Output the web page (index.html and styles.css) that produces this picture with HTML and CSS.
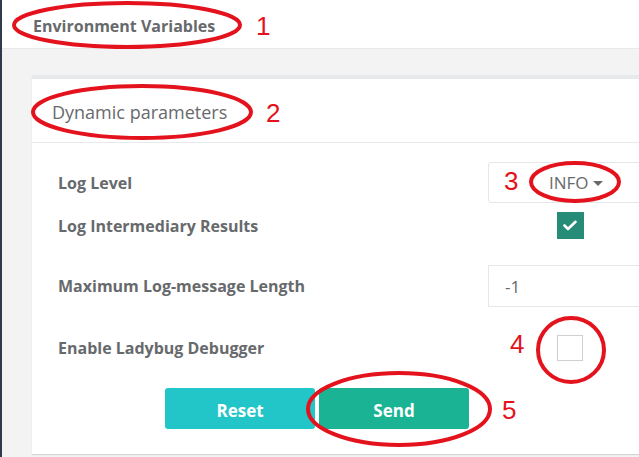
FILE: index.html
```html
<!DOCTYPE html>
<html>
<head>
<meta charset="utf-8">
<link rel="stylesheet" href="styles.css">
</head>
<body>
<div class="page">
  <div class="edge"></div>
  <div class="main">
    <div class="topbar"><span class="topbar-title">Environment Variables</span></div>
    <div class="content">
      <div class="card">
        <div class="card-title">Dynamic parameters</div>
        <div class="card-body">
          <div class="row r1">
            <div class="label">Log Level</div>
            <div class="control"><div class="select"><span>INFO</span><span class="caret"></span></div></div>
          </div>
          <div class="row r2">
            <div class="label">Log Intermediary Results</div>
            <div class="control center">
              <div class="check checked">
                <svg width="14" height="11" viewBox="0 0 14 11"><path d="M1.5 5.5 L5 9 L12.5 1.8" fill="none" stroke="#fff" stroke-width="2.6" stroke-linecap="round" stroke-linejoin="round"/></svg>
              </div>
            </div>
          </div>
          <div class="row r3">
            <div class="label">Maximum Log-message Length</div>
            <div class="control"><div class="input">-1</div></div>
          </div>
          <div class="row r4">
            <div class="label">Enable Ladybug Debugger</div>
            <div class="control center"><div class="check"></div></div>
          </div>
          <div class="buttons">
            <button class="btn btn-reset">Reset</button>
            <button class="btn btn-send">Send</button>
          </div>
        </div>
      </div>
    </div>
  </div>
</div>
<svg class="marks" width="639" height="457" viewBox="0 0 639 457">
  <g fill="none" stroke="#e3121c" stroke-width="4">
    <ellipse cx="127" cy="25" rx="113" ry="22"/>
    <ellipse cx="142" cy="112" rx="109" ry="26"/>
    <ellipse cx="575" cy="182" rx="44" ry="19"/>
    <ellipse cx="571" cy="350" rx="33" ry="32"/>
    <ellipse cx="399" cy="409" rx="91" ry="36"/>
  </g>
</svg>
<div class="num n1">1</div>
<div class="num n2">2</div>
<div class="num n3">3</div>
<div class="num n4">4</div>
<div class="num n5">5</div>
</body>
</html>
```
FILE: styles.css
```css
html, body {
  margin: 0;
  padding: 0;
  width: 639px;
  height: 457px;
  overflow: hidden;
  font-family: "Open Sans", "Liberation Sans", sans-serif;
  color: #676a6c;
}
.page {
  display: flex;
  height: 457px;
  position: relative;
}
.edge {
  width: 2px;
  flex: none;
  background: #2f3b4a;
}
.main {
  flex: 1;
  display: flex;
  flex-direction: column;
  min-width: 0;
}
.topbar {
  box-sizing: border-box;
  height: 49px;
  background: #fff;
  border-bottom: 1px solid #e7eaec;
  display: flex;
  align-items: center;
  padding-left: 31px;
  padding-top: 3px;
  flex: none;
}
.topbar-title {
  font-weight: 700;
  font-size: 16px;
}
.content {
  flex: 1;
  background: #f3f3f4;
  padding: 26px 0 0 30px;
  min-width: 0;
}
.card {
  border-top: 4px solid #e7eaec;
  background: #fff;
  box-shadow: 0 1px 1px rgba(0,0,0,0.12);
  overflow: hidden;
}
.card-title {
  box-sizing: border-box;
  height: 64px;
  border-bottom: 1px solid #e7eaec;
  display: flex;
  align-items: center;
  padding-left: 20px;
  padding-top: 2px;
  font-size: 18px;
}
.card-body {
  padding: 19px 0 25px 26px;
}
.row {
  display: flex;
  align-items: center;
}
.label {
  width: 430px;
  flex: none;
  font-weight: 700;
  font-size: 16px;
}
.control {
  width: 164px;
  flex: none;
  display: flex;
}
.control.center {
  justify-content: center;
}
.r1 { height: 41px; margin-bottom: 9px; }
.r2 { height: 27px; margin-bottom: 26px; }
.r3 { height: 42px; margin-bottom: 28px; }
.r4 { height: 26px; margin-bottom: 27px; }
.select {
  box-sizing: border-box;
  width: 164px;
  height: 41px;
  border: 1px solid #e5e6e7;
  border-radius: 3px;
  display: flex;
  align-items: center;
  padding-left: 60px;
  font-size: 17px;
  gap: 4px;
}
.caret {
  width: 0;
  height: 0;
  border-left: 5px solid transparent;
  border-right: 5px solid transparent;
  border-top: 5px solid #676a6c;
  margin-top: 2px;
}
.input {
  box-sizing: border-box;
  width: 164px;
  height: 42px;
  border: 1px solid #e5e6e7;
  display: flex;
  align-items: center;
  padding-left: 16px;
  font-size: 17px;
}
.check {
  box-sizing: border-box;
  width: 26px;
  height: 26px;
  border: 1px solid #cfcfcf;
  background: #fff;
  display: flex;
  align-items: center;
  justify-content: center;
}
.check.checked {
  width: 27px;
  height: 27px;
  border: none;
  background: #268c78;
}
.buttons {
  display: flex;
  gap: 4px;
  padding-left: 107px;
}
.btn {
  box-sizing: border-box;
  width: 150px;
  height: 41px;
  border: none;
  border-radius: 3px;
  color: #fff;
  font-family: "Open Sans", "Liberation Sans", sans-serif;
  font-weight: 700;
  font-size: 17px;
  padding: 3px 0 0;
}
.btn-reset { background: #23c6c8; }
.btn-send { background: #1ab394; }
.marks {
  position: absolute;
  left: 0;
  top: 0;
  pointer-events: none;
}
.num {
  position: absolute;
  font-family: "Liberation Sans", sans-serif;
  font-size: 26px;
  line-height: 26px;
  color: #e3121c;
}
.n1 { left: 256px; top: 13px; }
.n2 { left: 266px; top: 100px; }
.n3 { left: 504px; top: 168px; }
.n4 { left: 510px; top: 331px; }
.n5 { left: 502px; top: 397px; }
```
